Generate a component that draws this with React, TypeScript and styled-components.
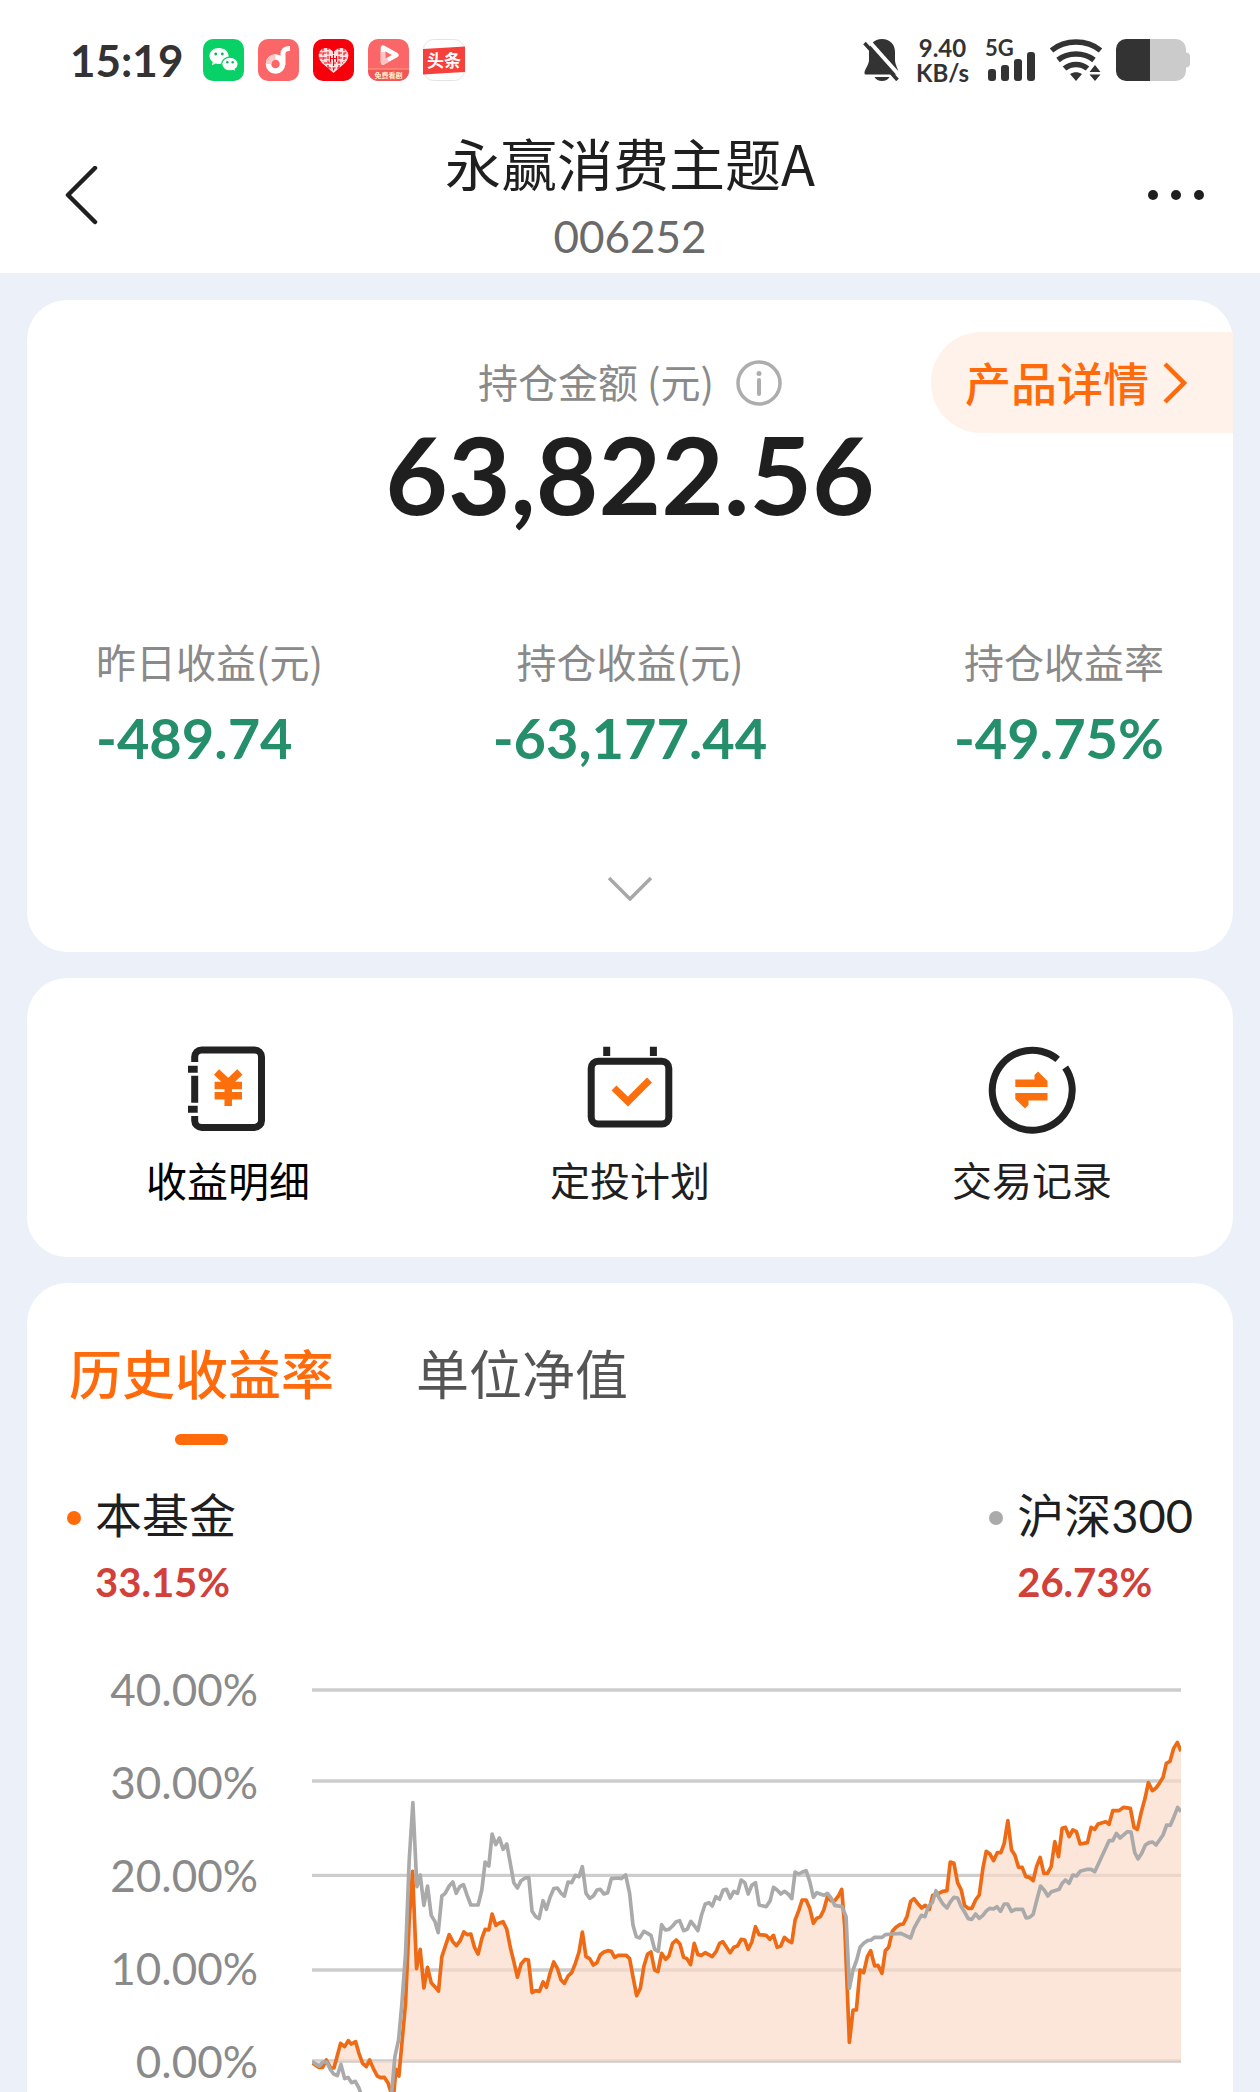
import React from "react";
import styled, { createGlobalStyle } from "styled-components";

const INK = "#1f1f1f";
const ORANGE = "#ff6a0a";
const GREY = "#8a8a8a";
const GREEN = "#258f69";
const RED = "#d2403a";
const NUMERIC = `Lato, "Noto Sans CJK SC", sans-serif`;

const GlobalStyle = createGlobalStyle`
  *, *::before, *::after { box-sizing: border-box; }
  body {
    margin: 0;
    background: #ecf0f8;
    color: ${INK};
    font-family: "Noto Sans CJK SC", "Noto Sans", sans-serif;
  }
  button {
    padding: 0;
    border: 0;
    background: none;
    color: inherit;
    font: inherit;
    cursor: pointer;
  }
  svg { display: block; }
  h1, p, dl, dd, dt { margin: 0; font-weight: inherit; }
`;

const Page = styled.div`
  display: flex;
  flex-direction: column;
  min-height: 100vh;
`;

/* ---------- status bar ---------- */

const StatusBar = styled.div`
  display: flex;
  align-items: center;
  justify-content: space-between;
  height: 120px;
  padding: 0 70px;
  background: #fff;
  color: #333;
  font-family: ${NUMERIC};
`;

const StatusGroup = styled.div`
  display: flex;
  align-items: center;
  gap: 14px;
`;

const Clock = styled.span`
  margin-right: 6px;
  font-size: 44px;
  font-weight: 700;
  line-height: 56px;
`;

const NetSpeed = styled.span`
  display: flex;
  flex-direction: column;
  align-items: center;
  padding: 0 2px;
  font-size: 24px;
  font-weight: 700;
  line-height: 25px;
`;

/* ---------- title bar ---------- */

const TitleBar = styled.header`
  display: grid;
  grid-template-columns: 1fr auto 1fr;
  align-items: center;
  padding: 8px 55px 9px;
  background: #fff;
`;

const Titles = styled.div`
  display: flex;
  flex-direction: column;
  align-items: center;
  gap: 12px;
`;

const FundName = styled.h1`
  font-size: 56px;
  font-weight: 400;
  line-height: 68px;
`;

const FundCode = styled.p`
  color: #6a6a6a;
  font-family: ${NUMERIC};
  font-size: 44px;
  line-height: 56px;
`;

const IconButton = styled.button<{ $side?: "start" | "end" }>`
  justify-self: ${(p) => p.$side ?? "center"};
`;

/* ---------- cards ---------- */

const Main = styled.main`
  flex: 1;
  display: flex;
  flex-direction: column;
  gap: 26px;
  padding: 27px 27px 0;
`;

const Card = styled.section`
  border-radius: 40px;
  background: #fff;
`;

const SummaryCard = styled(Card)`
  display: flex;
  flex-direction: column;
  align-items: center;
  padding: 32px 0 51px;
`;

const SummaryHead = styled.div`
  display: grid;
  grid-template-columns: 1fr auto 1fr;
  align-items: center;
  width: 100%;
`;

const AmountLabel = styled.div`
  grid-column: 2;
  display: flex;
  align-items: center;
  gap: 22px;
  color: ${GREY};
  font-size: 40px;
  line-height: 60px;
`;

const RaisedText = styled.span`
  padding-bottom: 4px;
`;

const DetailLink = styled.a`
  justify-self: end;
  display: flex;
  align-items: center;
  gap: 14px;
  height: 101px;
  padding: 0 46px 0 34px;
  border-radius: 50px 0 0 50px;
  background: #fff2ea;
  color: ${ORANGE};
  font-size: 46px;
  font-weight: 500;
  line-height: 60px;
  text-decoration: none;
`;

const Amount = styled.p`
  font-family: ${NUMERIC};
  font-size: 108px;
  font-weight: 700;
  line-height: 80px;
`;

const Stats = styled.dl`
  display: grid;
  grid-template-columns: 1fr auto 1fr;
  width: 100%;
  padding: 0 69px;
  margin: 118px 0 107px;
`;

const Stat = styled.div<{ $align: "start" | "center" | "end" }>`
  display: flex;
  flex-direction: column;
  align-items: ${(p) => p.$align};
  gap: 15px;
`;

const StatLabel = styled.dt`
  color: ${GREY};
  font-size: 40px;
  line-height: 60px;
`;

const StatValue = styled.dd`
  color: ${GREEN};
  font-family: ${NUMERIC};
  font-size: 56px;
  font-weight: 700;
  line-height: 64px;
`;

const ActionsCard = styled(Card)`
  display: grid;
  grid-template-columns: repeat(3, 1fr);
  padding: 68px 0 50px;
`;

const Action = styled.button<{ $strong?: boolean }>`
  display: flex;
  flex-direction: column;
  align-items: center;
  gap: 17px;
  color: ${(p) => (p.$strong ? "#000" : INK)};
  font-size: ${(p) => (p.$strong ? 41 : 40)}px;
  line-height: 56px;
`;

const HistoryCard = styled(Card)`
  flex: 1;
  display: flex;
  flex-direction: column;
  padding: 53px 40px 0;
  border-radius: 40px 40px 0 0;
`;

const Tabs = styled.div`
  display: flex;
  gap: 80px;
`;

const Tab = styled.button<{ $active?: boolean }>`
  display: flex;
  flex-direction: column;
  align-items: center;
  gap: 26px;
  padding-left: 2px;
  color: ${(p) => (p.$active ? ORANGE : "#555")};
  font-size: 53px;
  font-weight: ${(p) => (p.$active ? 500 : 400)};
  line-height: 72px;

  &::after {
    content: "";
    width: 53px;
    height: 11px;
    border-radius: 6px;
    background: ${(p) => (p.$active ? ORANGE : "transparent")};
  }
`;

const Legend = styled.div`
  display: flex;
  justify-content: space-between;
  margin: 42px 0 37px;
`;

const LegendItem = styled.div`
  display: grid;
  grid-template-columns: 14px auto;
  align-items: center;
  gap: 15px 14px;
`;

const Dot = styled.span<{ $color: string }>`
  width: 14px;
  height: 14px;
  margin-top: 5px;
  border-radius: 50%;
  background: ${(p) => p.$color};
`;

const LegendName = styled.span`
  font-family: ${NUMERIC};
  font-size: 47px;
  line-height: 56px;
`;

const LegendValue = styled.span`
  grid-column: 2;
  color: ${RED};
  font-family: ${NUMERIC};
  font-size: 40px;
  font-weight: 700;
  line-height: 48px;
`;

const ChartArea = styled.div`
  display: grid;
  grid-template-columns: 191px 1fr;
  gap: 54px;
  height: 449px;
  padding-right: 12px;
  overflow: hidden;
`;

const AxisLabels = styled.div`
  display: flex;
  flex-direction: column;
  color: ${GREY};
  font-family: ${NUMERIC};
  font-size: 44px;
  line-height: 93px;
  text-align: right;
`;

const Plot = styled.svg`
  width: 100%;
  height: 449px;
`;

/* ---------- chart data: x along the period, y downwards ---------- */

const FUND =
  "0,1208 20,1222 32,1222 43,1200 56,1224 66,1224 86,1150 98,1160 109,1142 118,1152 131,1145 141,1180 152,1210 163,1220 173,1200 184,1225 196,1248 206,1253 217,1252 228,1268 237,1296 245,1310 252,1228 261,1248 270,1150 281,1030 292,780 302,634 314,926 325,868 336,984 347,922 358,968 369,980 380,993 390,890 412,824 423,845 434,857 445,842 456,816 466,824 477,822 488,862 499,882 510,836 520,808 531,810 541,762 552,796 563,789 574,785 585,808 596,864 606,904 617,952 628,912 640,898 650,900 661,998 672,992 683,994 694,966 704,982 715,940 726,906 737,925 748,960 758,970 769,948 780,938 791,910 802,876 812,816 823,890 834,896 845,915 856,908 866,884 877,876 888,872 899,874 909,892 920,886 944,886 954,896 964,950 975,1007 986,985 997,918 1008,882 1018,876 1029,930 1039,935 1050,880 1062,898 1072,888 1083,850 1094,840 1105,852 1116,892 1126,896 1137,914 1148,850 1159,884 1170,886 1181,878 1202,890 1214,874 1224,850 1234,845 1245,862 1256,878 1267,862 1278,858 1289,838 1300,840 1310,868 1321,846 1332,800 1343,824 1364,826 1375,838 1386,826 1397,862 1408,858 1419,832 1430,842 1441,848 1451,780 1462,752 1472,720 1484,720 1495,745 1506,790 1516,775 1527,770 1537,750 1548,710 1559,722 1570,722 1581,708 1591,688 1600,800 1614,1147 1625,1050 1635,1050 1646,930 1657,938 1668,890 1678,872 1690,918 1700,916 1712,940 1722,872 1732,862 1743,814 1754,802 1765,794 1776,792 1787,770 1798,724 1808,716 1819,730 1831,744 1842,736 1854,748 1864,706 1875,704 1894,694 1907,692 1917,606 1928,610 1939,668 1950,690 1960,736 1971,745 1982,745 1993,720 2004,705 2015,625 2025,574 2036,582 2047,602 2058,578 2069,578 2079,550 2090,482 2101,570 2111,585 2122,622 2133,622 2144,650 2155,652 2166,662 2176,620 2187,592 2198,640 2209,640 2220,620 2231,545 2242,590 2253,505 2263,502 2274,530 2285,510 2296,515 2307,552 2329,548 2340,502 2351,508 2361,492 2384,485 2394,493 2405,452 2424,452 2437,442 2458,445 2469,502 2479,508 2491,455 2502,415 2512,368 2524,392 2534,385 2545,370 2556,352 2566,310 2577,304 2588,265 2599,247 2610,274";

const INDEX =
  "0,1205 22,1218 33,1206 44,1206 55,1228 65,1242 76,1247 87,1213 98,1256 108,1252 119,1268 130,1264 141,1284 150,1310 225,1340 240,1290 249,1190 260,1140 270,1030 281,880 292,600 303,428 315,680 325,645 336,736 347,678 358,766 369,784 379,818 390,708 400,700 412,678 423,666 433,700 444,680 455,674 466,706 477,735 499,735 510,690 520,606 531,618 541,522 552,554 563,534 574,568 585,552 596,612 606,668 617,684 628,662 640,654 651,652 661,754 672,770 682,776 694,722 704,748 715,712 726,686 737,684 748,700 758,708 769,666 780,668 791,646 802,650 812,620 823,700 834,715 845,708 856,690 866,688 877,702 888,698 899,656 920,654 929,656 942,645 954,700 964,795 974,830 984,834 997,814 1008,820 1018,826 1029,868 1040,874 1050,794 1061,810 1072,808 1083,798 1094,785 1104,782 1116,812 1127,808 1138,784 1149,798 1159,812 1170,765 1181,732 1192,728 1202,738 1213,710 1224,718 1235,690 1245,688 1256,714 1267,694 1278,700 1289,660 1300,668 1310,702 1321,676 1332,668 1343,735 1364,740 1376,722 1386,682 1397,690 1408,702 1419,694 1430,702 1441,716 1451,636 1462,642 1473,636 1484,632 1495,665 1506,712 1516,698 1537,706 1548,700 1559,714 1570,736 1592,740 1604,770 1614,985 1625,930 1636,900 1646,862 1657,850 1668,842 1679,840 1690,832 1712,832 1722,824 1744,822 1769,820 1798,834 1808,805 1819,785 1830,766 1841,770 1852,738 1863,728 1874,692 1884,715 1895,732 1907,744 1917,726 1928,712 1939,714 1950,740 1960,756 1971,776 1982,778 1993,762 2004,775 2015,766 2026,752 2036,745 2047,747 2057,740 2068,754 2079,732 2089,732 2101,754 2112,748 2134,748 2145,774 2155,772 2166,763 2177,720 2188,678 2199,690 2210,708 2221,695 2244,688 2253,670 2263,660 2274,670 2285,645 2296,648 2307,634 2329,628 2340,628 2351,635 2394,542 2405,542 2416,520 2427,534 2449,515 2460,516 2471,578 2481,597 2492,580 2503,555 2514,548 2525,546 2535,555 2556,525 2567,495 2578,496 2589,470 2600,442 2610,455";

const AXIS = ["40.00%", "30.00%", "20.00%", "10.00%", "0.00%"];
const GRID_LINES = [90, 363, 646, 930, 1203];

/* ---------- icons ---------- */

const AppWeChat = () => (
  <svg width="41" height="42" viewBox="0 0 41 42">
    <rect width="41" height="42" rx="10" fill="#07d167" />
    <path d="M16 9C10.500 9 6.500 12.500 6.500 17c0 2.500 1.300 4.600 3.300 6l-.8 3.200 3.600-1.800c1 .3 2.200.5 3.400.5 5.400 0 9.600-3.500 9.600-7.900S21.400 9 16 9z" fill="#fff" />
    <path d="M27 18.200c-4.700 0-8.300 3-8.300 6.800s3.600 6.900 8.300 6.900c1 0 2-.2 2.900-.4l3 1.500-.7-2.700c1.800-1.200 3-3.100 3-5.300 0-3.800-3.500-6.800-8.200-6.800z" fill="#fff" stroke="#07d167" strokeWidth="1.200" />
    <circle cx="12.700" cy="15" r="1.400" fill="#07b85c" />
    <circle cx="19.300" cy="15" r="1.400" fill="#07b85c" />
    <circle cx="24.300" cy="23.200" r="1.200" fill="#07b85c" />
    <circle cx="29.700" cy="23.200" r="1.200" fill="#07b85c" />
  </svg>
);

const AppMusic = () => (
  <svg width="41" height="42" viewBox="0 0 41 42">
    <rect width="41" height="42" rx="10" fill="#fb6668" />
    <circle cx="17.500" cy="25" r="7" fill="none" stroke="#fff" strokeWidth="5.500" />
    <path d="M10.500 25a7 7 0 0 1 7-7" fill="none" stroke="#ffc9c9" strokeWidth="5.500" />
    <path d="M25 26V15c0-4 2-5.500 7-5.500" fill="none" stroke="#fff" strokeWidth="5" />
  </svg>
);

const AppHeart = () => (
  <svg width="41" height="42" viewBox="0 0 41 42">
    <rect width="41" height="42" rx="10" fill="#f5000b" />
    <path d="M20.500 34 9 24c-3-3-4-7-3-10 1.500-5 7.500-6.500 11.500-3.500l3 2.300 3-2.300c4-3 10-1.500 11.500 3.500 1 3 0 7-3 10z" fill="#ffdfe0" />
    <path d="M10 9v14M15 8v21M20.500 12v6M20.500 24v9M26 8v21M31 9v14M6 14h9M26 14h9M6 19h9M26 19h9M11 24h19M15 29h11" stroke="#f5000b" strokeWidth="1.100" strokeDasharray="3 1.500" />
    <path d="M17.500 17v6M20.500 16v8M23.500 17v6M17 19.500h7" stroke="#f5000b" strokeWidth="1" />
  </svg>
);

const AppVideo = () => (
  <svg width="41" height="42" viewBox="0 0 41 42">
    <rect width="41" height="42" rx="10" fill="#fb6668" />
    <path d="M0 30h41v2a10 10 0 0 1-10 10H10A10 10 0 0 1 0 32z" fill="#f0565a" />
    <path d="M0 30h41" stroke="#ffa27c" strokeWidth="1" />
    <path d="M15 8.500v15L28.500 16z" fill="none" stroke="#fff" strokeWidth="4.500" strokeLinejoin="round" />
    <path d="M15 13v10.500l5-2.800" fill="none" stroke="#ffc4c4" strokeWidth="4.500" strokeLinejoin="round" />
    <text x="20.500" y="38.500" textAnchor="middle" fontSize="7" fontWeight="700" fill="#fff0c8">免费看剧</text>
  </svg>
);

const AppNews = () => (
  <svg width="42" height="42" viewBox="0 0 42 42">
    <rect x=".5" y=".5" width="41" height="41" rx="10" fill="#fff" stroke="#e4e4e4" />
    <path d="M0 10 42 7.500V33L0 35.500z" fill="#f5403c" />
    <text x="21" y="28" textAnchor="middle" fontSize="17" fontWeight="700" fill="#fff">头条</text>
  </svg>
);

const BellOff = () => (
  <svg width="37" height="42" viewBox="0 0 37 42" fill="#333">
    <path d="M19 0C11 0 6 5.500 6 13v8c0 5-4.500 9-4.500 13 0 1 .5 1.500 1.500 1.500h31c1 0 1.500-.5 1.500-1.500 0-4-3.500-8-3.500-13v-8C32 5.500 27 0 19 0z" />
    <path d="M11.500 38h15c-1.500 2.700-4 4-7.500 4s-6-1.300-7.500-4z" />
    <path d="M4 0 37 37" stroke="#fff" strokeWidth="4" />
    <path d="M1.500 4 34.500 41" stroke="#333" strokeWidth="3.500" />
  </svg>
);

const Signal = () => (
  <svg width="51" height="54" viewBox="0 -6 51 54" fill="#333">
    <text x="0" y="17" fontSize="22" fontWeight="700">5G</text>
    <rect x="3" y="30" width="8" height="12" rx="3" />
    <rect x="16" y="26" width="8" height="16" rx="3" />
    <rect x="29" y="20" width="8" height="22" rx="3" />
    <rect x="42" y="13" width="8" height="29" rx="3" />
  </svg>
);

const Wifi = () => (
  <svg width="52" height="42" viewBox="0 0 52 42" fill="none" stroke="#333" strokeWidth="5.500">
    <path d="M1.500 11.500C15 .3 37 .3 50.500 11.500" />
    <path d="M8 21c10-8 26-8 36 0" />
    <path d="M14.500 29.500c6.500-5.500 16.500-5.500 23 0" />
    <path d="M20 35c4-2.500 8-2.500 12 0l-6 7z" fill="#333" stroke="none" />
    <path d="M45 26l5.500 7h-11zM45 42l5.500-6.500h-11z" fill="#333" stroke="none" />
  </svg>
);

const Battery = () => (
  <svg width="74" height="42" viewBox="0 0 74 42">
    <path d="M34 0h26a10 10 0 0 1 10 10v3.500c3 0 4 2 4 4v7c0 2-1 4-4 4V32a10 10 0 0 1-10 10H34z" fill="#cbcbcb" />
    <path d="M34 0H10A10 10 0 0 0 0 10v22a10 10 0 0 0 10 10h24z" fill="#333" />
  </svg>
);

const BackIcon = () => (
  <svg width="48" height="60" viewBox="0 0 48 60" fill="none" stroke={INK} strokeWidth="4.500" strokeLinecap="round" strokeLinejoin="round">
    <path d="M40 2 13 29l27 27" />
  </svg>
);

const MoreIcon = () => (
  <svg width="60" height="60" viewBox="0 0 60 60" fill={INK}>
    <circle cx="8" cy="29" r="5" />
    <circle cx="31" cy="29" r="5" />
    <circle cx="54" cy="29" r="5" />
  </svg>
);

const InfoIcon = () => (
  <svg width="46" height="46" viewBox="0 0 46 46" fill="none" stroke="#adadad">
    <circle cx="23" cy="23" r="21" strokeWidth="3.500" />
    <path d="M23 20v14" strokeWidth="4" strokeLinecap="round" />
    <circle cx="23" cy="13.500" r="2.500" fill="#adadad" stroke="none" />
  </svg>
);

const ChevronRight = () => (
  <svg width="24" height="42" viewBox="0 0 24 42" fill="none" stroke={ORANGE} strokeWidth="4.500">
    <path d="m2 2 19 19L2 40" />
  </svg>
);

const ChevronDown = () => (
  <svg width="44" height="24" viewBox="0 0 44 24" fill="none" stroke="#a8a8a8" strokeWidth="3.500">
    <path d="m1 1 21 21L43 1" />
  </svg>
);

const NotebookIcon = () => (
  <svg width="88" height="88" viewBox="0 0 88 88" fill="none" stroke="#222" strokeWidth="7">
    <path d="M10.700 16v-5a7 7 0 0 1 7-7h52.800a7 7 0 0 1 7 7v63.400a7 7 0 0 1-7 7H17.700a7 7 0 0 1-7-7V70M10.700 29.700v27M4 23.300h9.700M4 63.300h9.700" />
    <path d="m32.500 26 11.700 11 11.700-11M30.600 39.500H58M30.600 49.700H58M44.200 36v24" stroke="#fb700c" strokeWidth="7.500" />
  </svg>
);

const CalendarIcon = () => (
  <svg width="88" height="88" viewBox="0 0 88 88" fill="none" stroke="#222" strokeWidth="7">
    <rect x="5.200" y="15.200" width="77.600" height="62.800" rx="7" />
    <path d="M20.700.7V10M67.400.7V10" />
    <path d="m28 42 14 13.500 21.500-21.500" stroke="#fb700c" />
  </svg>
);

const TransferIcon = () => (
  <svg width="88" height="88" viewBox="0 0 88 88">
    <path d="M77.200 21.600A40 40 0 1 1 69.700 13.400" fill="none" stroke="#222" strokeWidth="7" />
    <path d="M27.300 33.500h19.200V29l3.500-3.500 9.500 9.500v6H27.300zM59.500 47H27.300v6l9.700 9.500 3.500-3.500v-4.500h19z" fill="#fb700c" />
  </svg>
);

/* ---------- page ---------- */

const STATS = [
  { label: "昨日收益(元)", value: "-489.74", align: "start" },
  { label: "持仓收益(元)", value: "-63,177.44", align: "center" },
  { label: "持仓收益率", value: "-49.75%", align: "end" },
] as const;

export default function App() {
  return (
    <Page>
      <GlobalStyle />
      <StatusBar>
        <StatusGroup>
          <Clock>15:19</Clock>
          <AppWeChat />
          <AppMusic />
          <AppHeart />
          <AppVideo />
          <AppNews />
        </StatusGroup>
        <StatusGroup>
          <BellOff />
          <NetSpeed>
            <span>9.40</span>
            <span>KB/s</span>
          </NetSpeed>
          <Signal />
          <Wifi />
          <Battery />
        </StatusGroup>
      </StatusBar>

      <TitleBar>
        <IconButton $side="start" aria-label="返回">
          <BackIcon />
        </IconButton>
        <Titles>
          <FundName>永赢消费主题A</FundName>
          <FundCode>006252</FundCode>
        </Titles>
        <IconButton $side="end" aria-label="更多">
          <MoreIcon />
        </IconButton>
      </TitleBar>

      <Main>
        <SummaryCard>
          <SummaryHead>
            <AmountLabel>
              <RaisedText>持仓金额 (元)</RaisedText>
              <IconButton aria-label="说明">
                <InfoIcon />
              </IconButton>
            </AmountLabel>
            <DetailLink href="#detail">
              <RaisedText>产品详情</RaisedText>
              <ChevronRight />
            </DetailLink>
          </SummaryHead>
          <Amount>63,822.56</Amount>
          <Stats>
            {STATS.map((s) => (
              <Stat key={s.label} $align={s.align}>
                <StatLabel>{s.label}</StatLabel>
                <StatValue>{s.value}</StatValue>
              </Stat>
            ))}
          </Stats>
          <IconButton aria-label="展开">
            <ChevronDown />
          </IconButton>
        </SummaryCard>

        <ActionsCard>
          <Action $strong>
            <NotebookIcon />
            收益明细
          </Action>
          <Action>
            <CalendarIcon />
            定投计划
          </Action>
          <Action>
            <TransferIcon />
            交易记录
          </Action>
        </ActionsCard>

        <HistoryCard>
          <Tabs role="tablist">
            <Tab role="tab" aria-selected $active>
              历史收益率
            </Tab>
            <Tab role="tab" aria-selected={false}>
              单位净值
            </Tab>
          </Tabs>
          <Legend>
            <LegendItem>
              <Dot $color={ORANGE} />
              <LegendName>本基金</LegendName>
              <LegendValue>33.15%</LegendValue>
            </LegendItem>
            <LegendItem>
              <Dot $color="#aaa" />
              <LegendName>沪深300</LegendName>
              <LegendValue>26.73%</LegendValue>
            </LegendItem>
          </Legend>
          <ChartArea>
            <AxisLabels>
              {AXIS.map((t) => (
                <span key={t}>{t}</span>
              ))}
            </AxisLabels>
            <Plot viewBox="0 -51 2610 1347" preserveAspectRatio="none" fill="none" strokeLinejoin="round">
              {GRID_LINES.map((y) => (
                <path key={y} d={`M0 ${y}H2610`} stroke="#cdcdcd" strokeWidth="10" />
              ))}
              <polygon points={`${FUND} 2610,1203 0,1203`} fill="#fbdac7" fillOpacity="0.68" />
              <polyline points={FUND} stroke="#ee6a14" strokeWidth="11" />
              <polyline points={INDEX} stroke="#aaa" strokeWidth="11" />
            </Plot>
          </ChartArea>
        </HistoryCard>
      </Main>
    </Page>
  );
}
